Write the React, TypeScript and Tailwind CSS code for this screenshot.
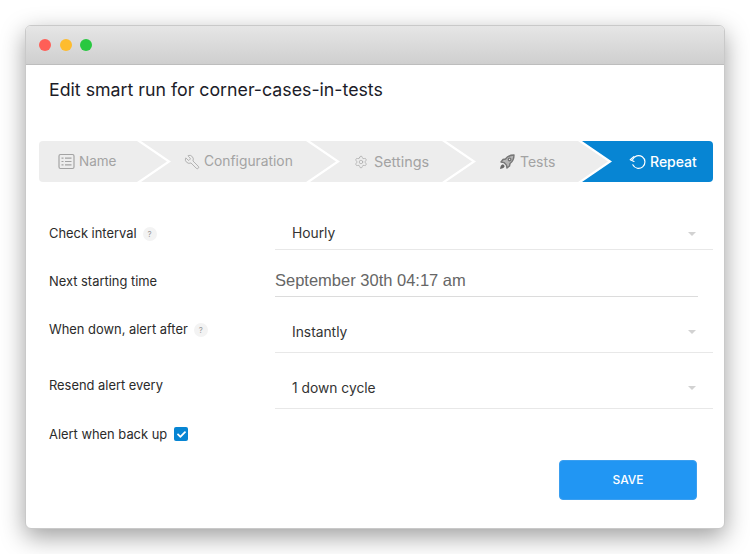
import { Wrench, Settings } from "lucide-react";
import { FaCheck } from "react-icons/fa";
import type { ReactNode } from "react";

const font = "font-['Inter','Noto_Sans',sans-serif]";

function ListIcon() {
  return (
    <svg width="17" height="17" viewBox="0 0 17 17" fill="none" stroke="currentColor" strokeWidth="1.2">
      <rect x="1" y="1.5" width="15" height="14" rx="1.5" />
      <path d="M3.5 5.2h2M3.5 8.5h2M3.5 11.8h2M7 5.2h6.5M7 8.5h6.5M7 11.8h6.5" />
    </svg>
  );
}

function RocketIcon() {
  return (
    <svg width="16" height="16" viewBox="0 0 16 16" fill="#b5b5b5" stroke="#777" strokeWidth="1.4" strokeLinejoin="round">
      <path d="M15 1c-3.5 0-6.5 1.2-8.5 4L4 5.5 2 8l3 .6 2.4 2.4.6 3 2.5-2 .5-2.5c2.8-2 4-5 4-8.5z" />
      <circle cx="10.6" cy="5.4" r="1.3" fill="#ededed" />
      <path d="M4 10.3c-1.6.3-2.6 1.7-3 4.7 3-.4 4.4-1.4 4.7-3z" fill="#666" stroke="none" />
    </svg>
  );
}

function UndoIcon() {
  return (
    <svg width="17" height="16" viewBox="0 0 17 16" fill="none" stroke="currentColor" strokeWidth="1.2" strokeLinecap="round" strokeLinejoin="round">
      <path d="M3.6 5.6A6.4 6.4 0 1 1 3.8 10.8" />
      <path d="M4.8 2.6 1.2 5.7l3.8 1.8" />
    </svg>
  );
}

function Help() {
  return (
    <span className="ml-[6px] inline-flex h-[14px] w-[14px] items-center justify-center rounded-full bg-[#f3f3f3] text-[8px] text-[#999]">
      ?
    </span>
  );
}

function Caret() {
  return <span className="h-0 w-0 border-x-[4px] border-t-[4px] border-x-transparent border-t-[#d2d2d2]" />;
}

function Select({ value, h, pb }: { value: string; h: string; pb: string }) {
  return (
    <div className={`flex w-[438px] items-center justify-between border-b border-[#e8e8e8] pl-[17px] pr-[17px] text-[13.8px] text-[#333] ${h} ${pb}`}>
      <span>{value}</span>
      <Caret />
    </div>
  );
}

function Row({ label, help, labelClass, children, rowClass }: { label: string; help?: boolean; labelClass: string; children: ReactNode; rowClass: string }) {
  return (
    <div className={`flex items-start ${rowClass}`}>
      <div className={`flex w-[226px] items-center text-[12.9px] text-[#2b2b2b] ${labelClass}`}>
        <span>{label}</span>
        {help && <Help />}
      </div>
      {children}
    </div>
  );
}

export default function App() {
  return (
    <div className={`h-[554px] w-[750px] overflow-hidden bg-white pl-[25px] pt-[25px] ${font}`}>
      <div className="flex h-[504px] w-[700px] flex-col overflow-hidden rounded-[6px] border border-[#c9c9c9] bg-white shadow-[0_8px_24px_rgba(0,0,0,0.38)]">
        <div className="flex h-[39px] shrink-0 items-center gap-[8.5px] border-b border-[#bdbdbd] bg-gradient-to-b from-[#e6e6e6] to-[#cfcfcf] pl-[13px]">
          <span className="h-[12px] w-[12px] rounded-full bg-[#ff5f57]" />
          <span className="h-[12px] w-[12px] rounded-full bg-[#febc2e]" />
          <span className="h-[12px] w-[12px] rounded-full bg-[#28c840]" />
        </div>

        <h1 className="pl-[23px] pt-[13px] text-[17.75px] leading-[24px] font-normal text-[#1c1c28]">
          Edit smart run for corner-cases-in-tests
        </h1>

        <div className="ml-[13px] mt-[39px] flex h-[41px] text-[14px] text-[#a3a3a3]">
          <div className="flex w-[128px] items-center gap-[4px] rounded-l-[4px] bg-[#ededed] pl-[19px] text-[13.5px] [clip-path:polygon(0_0,98px_0,128px_50%,98px_100%,0_100%)]">
            <ListIcon />
            <span>Name</span>
          </div>
          <div className="-ml-[26px] flex w-[195px] items-center gap-[4px] bg-[#ededed] pl-[43px] text-[13.8px] [clip-path:polygon(0_0,165px_0,195px_50%,165px_100%,0_100%,30px_50%)]">
            <Wrench size={16} strokeWidth={1.2} className="-scale-x-100" />
            <span>Configuration</span>
          </div>
          <div className="-ml-[26px] flex w-[162px] items-center gap-[6px] bg-[#ededed] pl-[44px] text-[14.4px] [clip-path:polygon(0_0,132px_0,162px_50%,132px_100%,0_100%,30px_50%)]">
            <Settings size={14} strokeWidth={1.1} />
            <span>Settings</span>
          </div>
          <div className="-ml-[26px] flex w-[162px] items-center gap-[5px] bg-[#ededed] pl-[53px] [clip-path:polygon(0_0,132px_0,162px_50%,132px_100%,0_100%,30px_50%)]">
            <RocketIcon />
            <span>Tests</span>
          </div>
          <div className="-ml-[26px] flex w-[131px] items-center gap-[4px] rounded-r-[4px] bg-[#0785d3] pl-[47px] font-medium text-white [clip-path:polygon(0_0,131px_0,131px_100%,0_100%,30px_50%)]">
            <UndoIcon />
            <span>Repeat</span>
          </div>
        </div>

        <div className="mt-[35px] flex flex-col pl-[23px]">
          <Row label="Check interval" help rowClass="h-[48px]" labelClass="h-[34px]">
            <Select value="Hourly" h="h-[33px]" pb="pt-[1px]" />
          </Row>
          <Row label="Next starting time" rowClass="h-[48px]" labelClass="h-[34px]">
            <div className="flex h-[32px] w-[423px] items-center border-b border-[#dcdcdc] font-['Liberation_Sans',Arial,sans-serif] text-[16.5px] text-[#666]">
              September 30th 04:17 am
            </div>
          </Row>
          <Row label="When down, alert after" help rowClass="h-[56px]" labelClass="h-[34px]">
            <Select value="Instantly" h="h-[40px]" pb="pb-[1px]" />
          </Row>
          <Row label="Resend alert every" rowClass="h-[53px]" labelClass="h-[34px]">
            <Select value="1 down cycle" h="h-[40px]" pb="pb-[1px]" />
          </Row>
          <Row label="Alert when back up" rowClass="h-[26px]" labelClass="h-[26px]">
            <span />
          </Row>
          <div className="-mt-[21px] ml-[125px] flex h-[14px] w-[14px] items-center justify-center rounded-[2px] bg-[#0785d3] text-white">
            <FaCheck size={9} />
          </div>
        </div>

        <div className="mr-[27px] mt-[19px] flex justify-end">
          <button className="h-[40px] w-[138px] rounded-[4px] border border-[#3b9ff0] bg-[#2196f3] text-[12px] font-medium text-white">
            SAVE
          </button>
        </div>
      </div>
    </div>
  );
}
